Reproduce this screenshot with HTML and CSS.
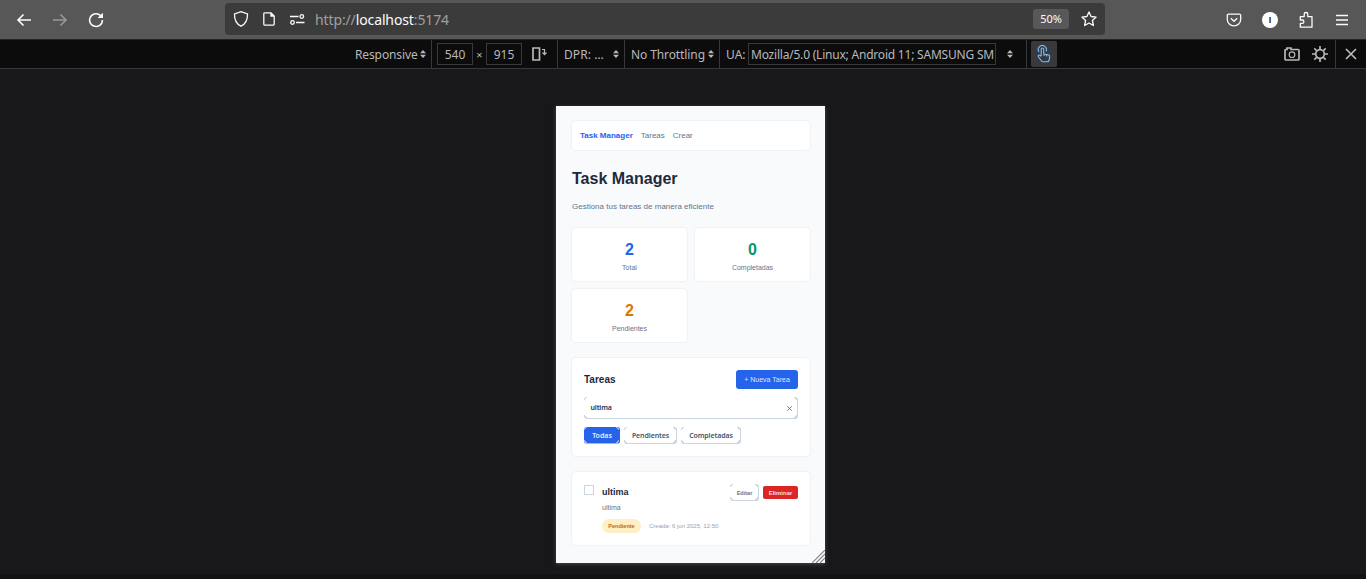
FILE: index.html
```html
<!DOCTYPE html>
<html lang="es">
<head>
<meta charset="utf-8">
<title>Task Manager</title>
<link rel="stylesheet" href="styles.css">
</head>
<body>
<svg class="defs" width="0" height="0"><symbol id="updown" viewBox="0 0 6 8"><path d="M0 3.2 3 0l3 3.2zM0 4.8h6L3 8z" fill="currentColor"/></symbol></svg>
<header class="navbar">
  <div class="nav-left">
    <svg width="16" height="16" viewBox="0 0 16 16"><path d="M15 8H2M7.5 2.5 2 8l5.500 5.500" class="s2"/></svg>
    <svg class="dim" width="16" height="16" viewBox="0 0 16 16"><path d="M1 8h13M8.500 2.500 14 8l-5.500 5.500" class="s2"/></svg>
    <svg width="16" height="16" viewBox="0 0 16 16"><path d="M13.700 5.200A6.400 6.400 0 1 0 14.400 8" class="s2"/><path d="M15 .8V6H9.600z" fill="#fbfbfe"/></svg>
  </div>
  <div class="urlbar">
    <svg width="16" height="18" viewBox="0 0 16 18"><path d="M8 1.600 14.500 4C14.700 10 12.500 14 8 16.200 3.500 14 1.300 10 1.500 4z" class="s1"/></svg>
    <svg width="12" height="14" viewBox="0 0 12 14"><path d="M2.200.8H8L11.200 4v8q0 1.200-1.200 1.200H2.200Q.8 13.200.8 12V2Q.8.800 2.200.800z" class="s1"/><path d="M7.300.5v4.200h4.200z" fill="#fbfbfe"/></svg>
    <svg width="15" height="11" viewBox="0 0 15 11"><path d="M0 2.500h8.500M6 8.500h8.500" class="s1"/><circle cx="11.800" cy="2.500" r="1.800" class="s1"/><circle cx="2.500" cy="8.500" r="1.800" class="s1"/></svg>
    <div class="address">http://<b>localhost</b>:5174</div>
    <div class="zoom">50%</div>
    <svg width="16" height="16" viewBox="0 0 16 16"><path d="m8 .9 2.100 4.600 5 .6-3.700 3.400 1 5L8 12l-4.400 2.500 1-5L.9 6.100l5-.6z" class="s1" stroke-linejoin="round"/></svg>
  </div>
  <div class="nav-right">
    <svg width="16" height="16" viewBox="0 0 16 16"><path d="M2.500 2.200h11q1.200 0 1.200 1.200V7.500a6.700 6.300 0 0 1-13.400 0V3.400q0-1.200 1.200-1.200z" class="s1"/><path d="m4.800 6.300 3.200 3 3.200-3" class="s1"/></svg>
    <span class="avatar">I</span>
    <svg width="16" height="18" viewBox="0 0 16 18"><path d="M2.300 16.200V12.400H4.200a1.700 1.700 0 0 0 0-3.400H2.300V5.600H6.200V3.300a1.800 1.800 0 0 1 3.600 0V5.600H14V16.200z" class="s1" stroke-linejoin="round"/></svg>
    <svg width="16" height="12" viewBox="0 0 16 12"><path d="M2 1.500h12M2 6h12M2 10.500h12" class="s1"/></svg>
  </div>
</header>
<div class="devbar">
  <div class="seg seg-device"><span class="t-device">Responsive</span><svg class="ud"><use href="#updown"/></svg></div>
  <div class="seg seg-size"><span class="box">540</span><span class="times">×</span><span class="box">915</span>
    <svg class="rotate" width="16" height="14" viewBox="0 0 16 14"><path d="M1 1h6.500v12H1z" class="g2"/><path d="M10 2.500h2.500v5M10.500 5.500l2 2.200 2-2.200" class="g1"/></svg></div>
  <div class="seg seg-dpr"><span class="t-dpr">DPR: …</span><svg class="ud"><use href="#updown"/></svg></div>
  <div class="seg seg-thr"><span class="t-thr">No Throttling</span><svg class="ud"><use href="#updown"/></svg></div>
  <div class="seg seg-ua"><span class="t-ua">UA:</span><span class="ua-box"><span class="ua-text">Mozilla/5.0 (Linux; Android 11; SAMSUNG SM</span></span><svg class="ud"><use href="#updown"/></svg></div>
  <div class="touch"><svg width="16" height="18" viewBox="0 0 16 18"><path d="M5.200 11V4.200a1.200 1.200 0 0 1 2.500 0V9l4.800.8q1.400.3 1.200 2L13 15.500q-.3 1.200-1.500 1.200H7q-1 0-1.700-1L2.200 11.600q-.4-1.200.8-1.600.9-.1 2.200 1.500M8.200 9v2M10.600 9.500v2" class="hand"/><path d="M3 7A4.100 4.100 0 1 1 10 6.500" class="hand"/></svg></div>
  <div class="dev-right">
    <svg width="16" height="14" viewBox="0 0 16 14"><path d="M2 2.500h1V1h4v1.500h7q1 0 1 1V12q0 1-1 1H2q-1 0-1-1V3.500q0-1 1-1z" class="g2"/><circle cx="8" cy="7.700" r="2.800" class="g1"/></svg>
    <svg width="16" height="16" viewBox="0 0 16 16"><circle cx="8" cy="8" r="4.300" class="g2"/><path d="M8 0v3M8 13v3M0 8h3M13 8h3M2.300 2.300l2.200 2.200M11.500 11.500l2.200 2.200M13.700 2.300l-2.200 2.200M4.500 11.500l-2.200 2.200" class="g2"/></svg>
  </div>
  <div class="close"><svg width="12" height="12" viewBox="0 0 12 12"><path d="m1 1 10 10M11 1 1 11" class="g2"/></svg></div>
</div>
<div class="stage">
  <main class="phone">
    <nav class="card menu"><b>Task Manager</b><span>Tareas</span><span>Crear</span></nav>
    <h1>Task Manager</h1>
    <p class="lead">Gestiona tus tareas de manera eficiente</p>
    <section class="stats">
      <div class="card stat"><b class="blue">2</b><span>Total</span></div>
      <div class="card stat"><b class="green">0</b><span>Completadas</span></div>
      <div class="card stat"><b class="orange">2</b><span>Pendientes</span></div>
    </section>
    <section class="card filters">
      <div class="head"><h2>Tareas</h2><span class="new">+ Nueva Tarea</span></div>
      <div class="search edged"><span>ultima</span><svg width="5" height="5" viewBox="0 0 5 5"><path d="m.3.3 4.400 4.400M4.700.3.3 4.700" stroke="#606b79" stroke-width=".9"/></svg></div>
      <div class="tabs"><span class="edged active">Todas</span><span class="edged pend">Pendientes</span><span class="edged comp">Completadas</span></div>
    </section>
    <section class="card task">
      <span class="check"></span>
      <div class="info"><h3>ultima</h3><p>ultima</p><div class="meta"><span class="pill">Pendiente</span><time>Creada: 6 jun 2025, 12:50</time></div></div>
      <div class="actions"><span class="edged edit">Editar</span><span class="delete">Eliminar</span></div>
    </section>
    <svg class="grip" width="13" height="13" viewBox="0 0 13 13"><path d="M0 13 13 0M4 13l9-9M8 13l5-5" stroke="#858585" stroke-width="1.200"/></svg>
  </main>
</div>
</body>
</html>
```
FILE: styles.css
```css
* { box-sizing: border-box; }
body { margin: 0; height: 579px; overflow: hidden; background: #18181a; font-family: "Liberation Sans", Arial, sans-serif; display: flex; flex-direction: column; }
svg { flex: none; display: block; }
.defs { position: absolute; }
h1, h2, h3, p { margin: 0; }
.s1, .s2 { fill: none; stroke: #fbfbfe; stroke-width: 1.3; }
.s2 { stroke-width: 1.6; }
.g1, .g2 { fill: none; stroke: #b8b8bb; stroke-width: 1.2; }
.g2 { stroke-width: 1.7; }
.hand { fill: none; stroke: #75bfff; stroke-width: 1.1; }
.dim { opacity: .4; }

.navbar { height: 39px; flex: none; background: #575757; display: flex; align-items: center; font-family: "Noto Sans", sans-serif; }
.nav-left { width: 225px; padding-left: 16px; display: flex; gap: 20px; }
.urlbar { width: 880px; height: 32px; margin-top: -1px; border-radius: 4px; background: #3b3b3b; display: flex; align-items: center; padding: 0 8px; }
.urlbar svg:nth-child(2) { margin-left: 14px; }
.urlbar svg:nth-child(3) { margin-left: 15px; }
.address { margin-left: 10px; flex: 1; color: #a0a0a0; font-size: 14px; letter-spacing: -.12px; }
.address b { color: #fbfbfe; font-weight: 400; }
.zoom { width: 36px; height: 20px; margin-right: 12px; border-radius: 3px; background: #585858; color: #fbfbfe; font-size: 11px; line-height: 20px; text-align: center; }
.nav-right { margin-left: 121px; display: flex; align-items: center; gap: 20px; }
.avatar { width: 16px; height: 16px; border-radius: 50%; background: #fff; color: #222; font: 700 9px/16px "Liberation Sans", sans-serif; text-align: center; }

.devbar { height: 30px; flex: none; background: #0c0c0d; border-top: 1px solid #242426; border-bottom: 1px solid #38383d; display: flex; align-items: center; color: #b8b8bb; font: 12px/16px "Noto Sans", sans-serif; white-space: nowrap; }
.seg { height: 28px; display: flex; align-items: center; border-right: 1px solid #38383d; }
.seg > span:not(.box):not(.ua-box) { padding-top: 1px; }
.ud { width: 6px; height: 8px; }
.seg-device { width: 432px; padding-left: 355px; }
.t-device { width: 65px; letter-spacing: -.12px; }
.seg-size { width: 126px; padding-left: 5px; }
.box { width: 36px; height: 22px; border: 1px solid #38383d; text-align: center; line-height: 21px; }
.times { width: 13px; text-align: center; font-size: 11px; }
.rotate { margin-left: 10px; }
.seg-dpr { width: 67px; padding-left: 6px; }
.t-dpr { width: 49px; letter-spacing: .1px; }
.seg-thr { width: 95px; padding-left: 6px; }
.t-thr { width: 77px; letter-spacing: -.1px; }
.seg-ua { width: 307px; padding-left: 6px; }
.t-ua { width: 22px; }
.ua-box { width: 248px; height: 22px; margin-right: 11px; border: 1px solid #38383d; padding-left: 2px; line-height: 21px; overflow: hidden; }
.ua-text { letter-spacing: -.21px; }
.touch { width: 26px; height: 26px; margin-left: 4px; border-radius: 2px; background: #38383d; display: flex; align-items: center; justify-content: center; }
.dev-right { flex: 1; height: 28px; border-right: 1px solid #38383d; display: flex; align-items: center; justify-content: flex-end; gap: 12px; padding-right: 7px; }
.close { width: 30px; padding-left: 9px; }

.stage { flex: 1; padding: 37px 0 0 556px; border-bottom: 5px solid #121214; }
.phone { position: relative; width: 269px; height: 457px; background: #f9fafc; padding: 15px 15px 0 16px; color: #1e293b; box-shadow: 0 1px 4px #4a4a4d; }
.card { background: #fff; border-radius: 4px; box-shadow: 0 0 2px rgba(15, 23, 42, .13); }
.menu { height: 29px; display: flex; gap: 8px; padding-left: 8px; font-size: 8px; line-height: 29px; color: #64748b; }
.menu b { color: #2563eb; }
h1 { height: 24px; margin-top: 17px; font-size: 16px; line-height: 24px; }
.lead { margin-top: 10px; font-size: 8px; line-height: 12px; color: #64748b; }
.stats { margin-top: 15px; display: grid; grid-template-columns: 115px 115px; gap: 8px; }
.stat { height: 53px; padding-top: 12px; display: flex; flex-direction: column; align-items: center; font-size: 7px; color: #64748b; line-height: 10px; }
.stat b { font-size: 16px; line-height: 20px; margin-bottom: 3px; }
.blue { color: #2563eb; }
.green { color: #059669; }
.orange { color: #d97706; }
.filters { height: 98px; margin-top: 16px; padding: 12px; }
.head { height: 19px; display: flex; justify-content: space-between; align-items: center; }
h2 { font-size: 10px; }
.new { width: 62px; height: 19px; border-radius: 3px; background: #2563eb; color: #dbe6fd; font-size: 7px; line-height: 19px; text-align: center; }
.edged { --edge: #cbd5e1; border-right: 1px solid var(--edge); border-bottom: 1px solid var(--edge); border-radius: 3px;
  background-image: linear-gradient(135deg, transparent 15%, var(--edge) 16% 48%, transparent 50%), linear-gradient(225deg, transparent 15%, var(--edge) 16% 48%, transparent 50%), linear-gradient(45deg, transparent 15%, var(--edge) 16% 48%, transparent 50%), linear-gradient(315deg, transparent 15%, var(--edge) 16% 48%, transparent 50%);
  background-size: 4px 4px; background-repeat: no-repeat; background-position: 0 0, 100% 0, 0 100%, 100% 100%; }
.search { height: 22px; margin-top: 8px; padding: 1px 5px 0 6.5px; display: flex; align-items: center; justify-content: space-between; font: 600 7px/20px "Noto Sans", sans-serif; letter-spacing: -.15px; color: #283344; }
.tabs { display: flex; gap: 4px; margin-top: 8px; font: 600 7px/18px "Noto Sans", sans-serif; text-align: center; color: #475569; }
.tabs span { height: 17px; padding-left: 1px; }
.tabs .active { width: 36px; background-color: #2563eb; color: #e8effd; --edge: #9dbaf5; border-right-color: #2563eb; }
.pend { width: 53px; letter-spacing: -.1px; }
.comp { width: 60px; letter-spacing: -.1px; }
.task { height: 73px; margin-top: 16px; padding: 12px 12px 0; display: flex; align-items: flex-start; }
.check { width: 10px; height: 10px; margin-top: 1px; border: 1px solid #cbd5e1; }
.info { flex: 1; padding: 1px 0 0 8px; }
h3 { font-size: 9px; line-height: 15px; }
.info p { font-size: 7px; line-height: 10px; margin-top: 3px; color: #64748b; }
.meta { display: flex; align-items: center; gap: 8px; margin-top: 6px; font-size: 6px; color: #94a3b8; white-space: nowrap; }
.pill { width: 39px; height: 14px; border-radius: 7px; background: #fef0c3; color: #b76b30; font-weight: 700; font-size: 5.500px; line-height: 14px; text-align: center; }
.actions { display: flex; gap: 4px; font-size: 6px; font-weight: 700; text-align: center; }
.edit { width: 29px; height: 17px; padding-left: 1px; line-height: 18px; font-size: 5.5px; color: #64748b; }
.delete { width: 35px; height: 13px; margin-top: 2px; border-radius: 2px; background: #dc2626; color: #fbdcdc; line-height: 14px; }
.grip { position: absolute; right: 0; bottom: 0; }
```
